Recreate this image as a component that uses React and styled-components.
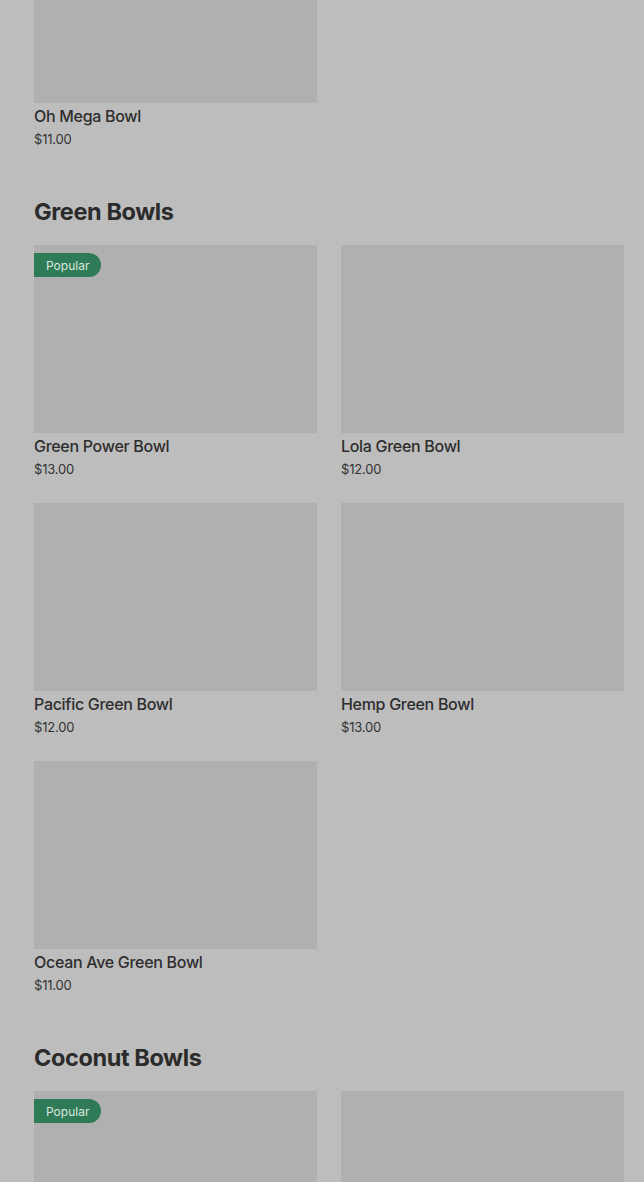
import React from 'react';
import styled, { createGlobalStyle } from 'styled-components';

const sections = [
  {
    title: null,
    items: [{ name: 'Oh Mega Bowl', price: '$11.00' }],
  },
  {
    title: 'Green Bowls',
    items: [
      { name: 'Green Power Bowl', price: '$13.00', popular: true },
      { name: 'Lola Green Bowl', price: '$12.00' },
      { name: 'Pacific Green Bowl', price: '$12.00' },
      { name: 'Hemp Green Bowl', price: '$13.00' },
      { name: 'Ocean Ave Green Bowl', price: '$11.00' },
    ],
  },
  {
    title: 'Coconut Bowls',
    items: [
      { name: 'Coconut Bowl', price: '$12.00', popular: true },
      { name: 'Coconut Berry Bowl', price: '$12.00' },
    ],
  },
];

const App = () => {
  return (
    <>
      <GlobalStyle />
      <StyledPage>
        {sections.map((section, i) => (
          <StyledSection key={i}>
            {section.title && <StyledHeading>{section.title}</StyledHeading>}
            <StyledGrid>
              {section.items.map((item) => (
                <StyledCard key={item.name}>
                  <StyledImage>
                    {item.popular && <StyledBadge>Popular</StyledBadge>}
                  </StyledImage>
                  <StyledName>{item.name}</StyledName>
                  <StyledPrice>{item.price}</StyledPrice>
                </StyledCard>
              ))}
            </StyledGrid>
          </StyledSection>
        ))}
      </StyledPage>
    </>
  );
};

const GlobalStyle = createGlobalStyle`
  html, body {
    margin: 0;
    padding: 0;
    background: #bdbdbd;
    overflow: hidden;
  }
  body {
    font-family: 'Inter', 'Liberation Sans', sans-serif;
    color: #2e2e2e;
  }
`;

const StyledPage = styled.div`
  margin-top: -85px;
  padding: 0 20px 0 34px;
  display: flex;
  flex-direction: column;
  gap: 47px;
`;

const StyledSection = styled.section`
  display: flex;
  flex-direction: column;
  gap: 17px;
`;

const StyledHeading = styled.h2`
  margin: 0;
  font-size: 23.5px;
  line-height: 32px;
  font-weight: 700;
  letter-spacing: -0.4px;
  color: #2b2b2b;
`;

const StyledGrid = styled.div`
  display: grid;
  grid-template-columns: 283px 283px;
  column-gap: 24px;
  row-gap: 24px;
`;

const StyledCard = styled.div`
  display: flex;
  flex-direction: column;
  height: 234px;
`;

const StyledImage = styled.div`
  position: relative;
  height: 188px;
  background: #b0b0b0;
`;

const StyledBadge = styled.span`
  position: absolute;
  top: 8px;
  left: 0;
  height: 24px;
  padding: 0 12px;
  display: flex;
  align-items: center;
  background: #2f7b58;
  color: #dce6df;
  font-size: 12px;
  border-radius: 0 12px 12px 0;
`;

const StyledName = styled.div`
  margin-top: 2px;
  font-size: 16px;
  line-height: 22px;
  font-weight: 500;
  letter-spacing: -0.3px;
  color: #2e2e2e;
`;

const StyledPrice = styled.div`
  margin-top: 2px;
  font-size: 13px;
  line-height: 20px;
  letter-spacing: -0.2px;
  color: #333;
`;

export default App;
